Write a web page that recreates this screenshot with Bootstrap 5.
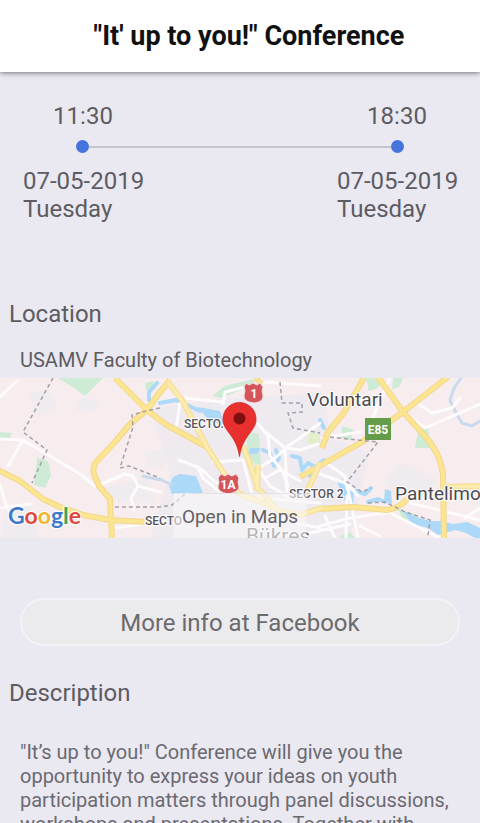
<!DOCTYPE html>
<html lang="en">
<head>
<meta charset="utf-8">
<meta name="viewport" content="width=device-width, initial-scale=1">
<title>"It' up to you!" Conference</title>
<link href="https://cdn.jsdelivr.net/npm/bootstrap@5.3.0/dist/css/bootstrap.min.css" rel="stylesheet">
<style>
  body { font-family: Roboto, "Liberation Sans", sans-serif; background: #eae8f1; color: #5d5c61; }
  .app-bar { min-height: 72px; box-shadow: 0 1px 5px rgba(0,0,0,.5); }
  .app-title { font-size: 27px; line-height: 32px; color: #111; padding-left: 18px; }
  .screen-body { min-height: 0; scrollbar-width: none; }
  .big-text { font-size: 24px; line-height: 28px; }
  .body-text { font-size: 20px; line-height: 24px; }
  .schedule { padding: 30px 23px 0; margin-bottom: 77px; }
  .schedule-side { width: 120px; }
  .track { padding: 10px 53px 14px; }
  .dot { width: 13px; height: 13px; background: #4474dc; }
  .track-line { height: 2px; background: #c5c5ca; }
  .section-title { padding-left: 9px; }
  .place { padding: 20px 20px 6px; }
  .map-art { height: 160px; }
  .map-btn { width: 133px; height: 45px; padding: 4px 0 0; background: rgba(250,247,248,.6); color: #626166; font-size: 19px; }
  .map-btn:hover { background: rgba(250,247,248,.8); }
  .fb-btn { height: 48px; margin: 60px 20px 33px; padding: 2px 0 0; background: #ebebed; border: 2px solid #f3f2f7; color: #6b6a6d; }
  .fb-btn:hover { background: #f3f2f5; color: #5d5c61; border-color: #fff; }
  .about { padding: 33px 20px; color: #6b6a70; }
</style>
</head>
<body class="vh-100 d-flex flex-column overflow-hidden">
<header class="app-bar bg-white d-flex align-items-center justify-content-center position-relative">
  <h1 class="app-title fw-bold m-0">"It' up to you!" Conference</h1>
</header>

<main class="screen-body flex-grow-1 overflow-auto">
  <section class="schedule big-text">
    <div class="d-flex justify-content-between text-center">
      <div class="schedule-side">11:30</div>
      <div class="schedule-side">18:30</div>
    </div>
    <div class="track d-flex align-items-center">
      <span class="dot rounded-circle"></span>
      <span class="track-line flex-grow-1"></span>
      <span class="dot rounded-circle"></span>
    </div>
    <div class="d-flex justify-content-between">
      <div class="schedule-side text-nowrap">07-05-2019<br>Tuesday</div>
      <div class="schedule-side text-nowrap">07-05-2019<br>Tuesday</div>
    </div>
  </section>

  <section>
    <h2 class="section-title big-text fw-normal m-0">Location</h2>
    <p class="place body-text m-0">USAMV Faculty of Biotechnology</p>
    <div class="position-relative overflow-hidden">
      <svg class="map-art d-block w-100" viewBox="0 0 480 160" preserveAspectRatio="xMidYMid slice" role="img" aria-label="Map around the faculty" font-family="Roboto, 'Liberation Sans', sans-serif">
        <rect width="480" height="160" fill="#f7edee"/>
        <!-- built-up areas -->
        <g fill="#eeeaef">
          <path d="M150 30 230 20 325 15 330 60 370 75 350 160 150 160 170 95Z"/>
          <path d="M385 100 400 85 437 100 430 115 395 120ZM30 15 48 12 58 30 35 38ZM78 20 98 22 96 34 76 32ZM145 75 165 70 165 90 148 88ZM5 130 30 125 40 160 0 160ZM100 110 150 100 155 125 120 125Z" opacity=".75"/>
        </g>
        <!-- parks -->
        <g fill="#cdebd5">
          <path d="M58 0H103L85 18 74 10ZM37 80 48 83 51 97 45 110 34 107ZM0 54 12 55 10 60H0ZM212 18 225 8 258 0 250 8 222 20ZM246 54 259 56 261 87 248 84ZM145 5 153 3 155 12 146 12ZM366 0H383L378 10 369 13ZM393 0H403L400 8 392 12ZM342 48 354 52 350 62 341 60ZM421 48 428 50 431 70 415 70 417 58ZM340 158 350 154 355 160H340ZM397 131 415 136 420 144 404 142Z"/>
          <path d="M308 55H320V66H308Z" fill="#e3eecb"/>
        </g>
        <!-- water -->
        <g fill="#acd9f8">
          <path d="M173 99 180 96 196 98 203 115 172 116 169 108ZM250 70H261L257 76H248ZM198 29 220 33 224 46 210 44ZM385 111 391 113 392 126 384 123ZM337 103 343 101 346 112 354 114 353 126 344 122ZM402 132 416 139 430 143 441 143 453 146 467 144 480 150V163L466 155 455 152 438 157 428 150 412 146Z"/>
        </g>
        <g fill="none" stroke="#acd9f8" stroke-linejoin="round" stroke-linecap="round">
          <path d="M149 22V14L157 5M160 25 176 22M176 22 200 33M263 72 270 75 274 88 279 80 276 72M292 78 300 80 302 92 308 85 317 90 310 98M320 42 324 50M320 85 324 82M356 113 365 116 371 110M368 124 378 121 385 124" stroke-width="4"/>
          <path d="M461 0 454 10 450 22 456 35 462 45 472 48 480 43M143 98 160 102M160 101 172 107" stroke-width="3" stroke="#c9d9ee"/>
        </g>
        <!-- minor roads -->
        <g fill="none" stroke="#fdfbfc" stroke-width="3" stroke-linejoin="round" stroke-linecap="round">
          <path d="M0 19 17 3M0 61 23 62 50 78 80 96 95 108M23 62 8 88M0 107 8 132M0 130 30 126M97 108 125 96 133 98 138 108 160 114M138 108 131 120 134 132M115 150 165 143M225 14 265 4 320 8M225 14 223 26M185 20 222 24M176 50 180 25M179 82 200 90 215 104 240 112M197 88 203 100 220 114M258 46 268 58 270 78 282 92 288 108M267 55 285 70 300 60 320 45M285 70 287 115M262 88 275 80 286 70 300 72 318 66M265 100 280 92 300 103M258 90 270 108 290 120M213 84 243 82M243 82 252 116"/>
          <path d="M390 0 368 50M403 34 425 50 480 26M414 23 432 35 452 30 460 20M322 60 360 54M320 96 348 106 358 118M326 85 345 98 352 130 358 160M347 118 346 160M320 148 350 140 390 134M390 135 440 160M360 148 380 158M325 138 335 160M310 155 350 146M410 125 480 142M465 140 480 130M260 120 320 125M270 140 320 150"/>
        </g>
        <!-- main roads -->
        <g fill="none" stroke-linejoin="round" stroke-linecap="butt">
          <path stroke="#f2d68c" stroke-width="6" d="M-2 92 20 103 43 121 60 129 83 137 110 142 145 144M115 0 147 32 165 46 207 69M170 2 157 18 147 32 130 46 115 64 97 83Q92 88 94 96L99 108 110 121 112 160M320 131 353 129 387 132Q400 130 407 121M378 -1 403 34 424 57Q440 74 443 96L444 160M448 -1 403 34 362 64 300 99M364 0 343 36 328 54 322 70"/>
          <path stroke="#fce590" stroke-width="4" d="M-2 92 20 103 43 121 60 129 83 137 110 142 145 144M115 0 147 32 165 46 207 69M170 2 157 18 147 32 130 46 115 64 97 83Q92 88 94 96L99 108 110 121 112 160M320 131 353 129 387 132Q400 130 407 121M378 -1 403 34 424 57Q440 74 443 96L444 160M448 -1 403 34 362 64 300 99M364 0 343 36 328 54 322 70"/>
          <path stroke="#f6e09a" stroke-width="6" d="M168 4 182 22 207 69 223 94 240 116 277 130M243 68 250 86 258 110 277 132 300 137 322 130M258 87 257 112M320 85 305 118M444 109 480 108M255 0 262 6"/>
          <path stroke="#fcecb0" stroke-width="3" d="M168 4 182 22 207 69 223 94 240 116 277 130M243 68 250 86 258 110 277 132 300 137 322 130M258 87 257 112M320 85 305 118M444 109 480 108"/>
        </g>
        <!-- district borders -->
        <path fill="none" stroke="#a3a0a8" stroke-width="1.5" stroke-dasharray="4 3" d="M53 0 23 54 47 72 32 105M160 30 146 33 132 37 133 49 120 90 129 88 160 100M115 129H160L172 127 185 116M280 4 282 25 302 25 302 34 288 35 293 50 320 55M330 59 357 62 378 64 347 104 362 114 371 110M368 125 385 124 405 134 430 142 428 158"/>
        <path fill="none" stroke="#c4c2c8" d="M190 115.500H310"/>

        <!-- map labels -->
        <g fill="#56545a" stroke="#fff" stroke-width="2" stroke-linejoin="round" paint-order="stroke" font-size="12" font-weight="500">
          <text x="184" y="50">SECTO.</text>
          <text x="289" y="120">SECTOR 2</text>
          <text x="145" y="147">SECTO</text>
          <g font-size="19" font-weight="400" fill="#4b494f">
            <text x="307" y="28">Voluntari</text>
            <text x="395" y="122">Pantelimo</text>
            <text x="246" y="165" fill="#56545a" font-size="21">Bükreş</text>
          </g>
        </g>
        <!-- road shields -->
        <g fill="#d4565b" stroke="#f5dfe2">
          <path d="M246 5 249 7 253 5 257 7 260 5 263 9Q261 13 263 17 264 24 254 25 243 24 244 17 246 13 244 9Z"/>
          <path d="M221 96 225 98 228 96 232 98 236 96 239 100Q237 104 239 108 240 114 228 116 217 114 218 108 220 104 218 100Z"/>
        </g>
        <rect x="365" y="40" width="26" height="22" fill="#659c49"/>
        <g fill="#fff" font-size="12" font-weight="700" text-anchor="middle">
          <text x="254" y="20">1</text><text x="228" y="111">1A</text><text x="378" y="56">E85</text>
        </g>
        <!-- location pin -->
        <path d="M239.500 78.500C238 67 233 60 228 53.500 224 48 223 45 223 41A16.500 16.500 0 0 1 256 41C256 45 255 48 251 53.500 246 60 241 67 239.500 78.500Z" fill="#e8312f" stroke="#cf2727" stroke-width=".8"/>
        <circle cx="239.500" cy="40.500" r="6" fill="#7d0f12"/>
        <!-- provider name -->
        <text x="8" y="146" font-family="Lato, Roboto, sans-serif" font-size="23" font-weight="700" stroke="#fff" stroke-width="2" paint-order="stroke"><tspan fill="#4079c9">G</tspan><tspan fill="#dc4a3d">o</tspan><tspan fill="#eeb72f">o</tspan><tspan fill="#4079c9">g</tspan><tspan fill="#3da45b">l</tspan><tspan fill="#dc4a3d">e</tspan></text>
      </svg>
      <button type="button" class="map-btn btn rounded-0 border-0 position-absolute bottom-0 start-50 translate-middle-x">Open in Maps</button>
    </div>
  </section>

  <div class="d-flex">
    <a href="#facebook" class="fb-btn btn rounded-pill flex-grow-1 big-text d-flex align-items-center justify-content-center">More info at Facebook</a>
  </div>

  <section id="facebook">
    <h2 class="section-title big-text fw-normal m-0">Description</h2>
    <p class="about body-text m-0">"It’s up to you!" Conference will give you the opportunity to express your ideas on youth participation matters through panel discussions, workshops and presentations. Together with</p>
  </section>
</main>
<script src="https://cdn.jsdelivr.net/npm/bootstrap@5.3.0/dist/js/bootstrap.bundle.min.js"></script>
</body>
</html>
